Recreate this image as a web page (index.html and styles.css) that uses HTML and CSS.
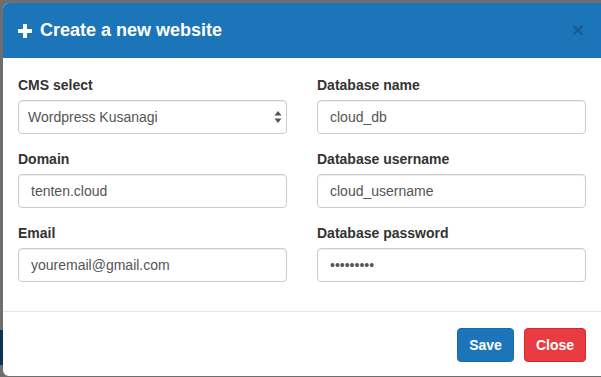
FILE: index.html
```html
<!DOCTYPE html>
<html lang="en">
<head>
  <meta charset="UTF-8" />
  <meta name="viewport" content="width=device-width, initial-scale=1.0"/>
  <title>Create a new website</title>
  <link rel="stylesheet" href="styles.css">
</head>
<body>
  <div class="backdrop-title">Ultratest WordPress Virtu</div>

  <div class="modal">
    <div class="modal-header">
      <h4 class="modal-title">
        <svg class="plus" width="14" height="14" viewBox="0 0 14 14"><path d="M5 0h4v5h5v4H9v5H5V9H0V5h5z" fill="#fff"/></svg>
        Create a new website
      </h4>
      <span class="close">&times;</span>
    </div>

    <div class="modal-body">
      <div class="row">
        <div class="col">
          <div class="form-group">
            <label for="cms">CMS select</label>
            <div class="select-wrap">
              <select id="cms" class="form-control">
                <option>Wordpress Kusanagi</option>
                <option>Wordpress</option>
              </select>
              <svg class="arrows" width="8" height="12" viewBox="0 0 8 12"><path d="M4 0L7.5 4.5H0.5z M4 12L7.5 7.5H0.5z" fill="#555"/></svg>
            </div>
          </div>
          <div class="form-group">
            <label for="domain">Domain</label>
            <input type="text" id="domain" class="form-control" value="tenten.cloud" />
          </div>
          <div class="form-group">
            <label for="email">Email</label>
            <input type="text" id="email" class="form-control" value="youremail@gmail.com" />
          </div>
        </div>
        <div class="col">
          <div class="form-group">
            <label for="dbName">Database name</label>
            <input type="text" id="dbName" class="form-control" value="cloud_db" />
          </div>
          <div class="form-group">
            <label for="dbUser">Database username</label>
            <input type="text" id="dbUser" class="form-control" value="cloud_username" />
          </div>
          <div class="form-group">
            <label for="dbPass">Database password</label>
            <input type="password" id="dbPass" class="form-control" value="secret123" />
          </div>
        </div>
      </div>
    </div>

    <div class="modal-footer">
      <button class="btn btn-primary">Save</button>
      <button class="btn btn-danger">Close</button>
    </div>
  </div>
</body>
</html>
```

FILE: styles.css
```css
html, body {
  margin: 0;
  height: 100%;
  overflow: hidden;
}
body {
  font-family: "Liberation Sans", Arial, sans-serif;
  font-size: 14px;
  color: #333;
  background: linear-gradient(#6e6e6e 0, #6e6e6e 330px, #0e3350 330px, #0e3350 365px, #6e6e6e 365px);
  padding: 3px 0 0 3px;
  box-sizing: border-box;
}
.backdrop-title {
  position: absolute;
  top: -29px;
  left: 336px;
  font-size: 30px;
  font-weight: bold;
  color: #1c1c1c;
  white-space: nowrap;
}
.modal {
  position: relative;
  z-index: 1;
  width: 598px;
  background: #fff;
  border-radius: 6px 0 0 6px;
  overflow: hidden;
}
.modal-header {
  background: #1c75b9;
  padding: 15px;
  display: flex;
  align-items: center;
  justify-content: space-between;
}
.modal-title {
  margin: 0;
  font-size: 18px;
  line-height: 25px;
  font-weight: bold;
  color: #fff;
  display: flex;
  align-items: center;
  gap: 8px;
}
.close {
  font-size: 21px;
  font-weight: bold;
  line-height: 1;
  color: #000;
  opacity: 0.2;
  margin-right: 2px;
  margin-top: -2px;
}
.modal-body {
  padding: 17px 15px 14px;
}
.row {
  display: flex;
  margin: 0 -15px;
}
.col {
  flex: 1;
  padding: 0 15px;
}
.form-group {
  margin-bottom: 15px;
}
label {
  display: block;
  font-weight: bold;
  line-height: 20px;
  margin-bottom: 5px;
}
.form-control {
  display: block;
  width: 100%;
  height: 34px;
  box-sizing: border-box;
  padding: 6px 12px;
  font-family: inherit;
  font-size: 14px;
  color: #555;
  background: #fff;
  border: 1px solid #ccc;
  border-radius: 4px;
  box-shadow: inset 0 1px 1px rgba(0,0,0,.075);
}
.select-wrap {
  position: relative;
}
select.form-control {
  -webkit-appearance: none;
  appearance: none;
  padding-left: 9px;
}
.arrows {
  position: absolute;
  right: 5px;
  top: 11px;
  pointer-events: none;
}
.modal-footer {
  border-top: 1px solid #e5e5e5;
  padding: 16px 15px 14px;
  display: flex;
  justify-content: flex-end;
  gap: 10px;
}
.btn {
  height: 34px;
  padding: 0 11px;
  font-family: inherit;
  font-size: 14px;
  font-weight: bold;
  color: #fff;
  border: 1px solid transparent;
  border-radius: 4px;
  cursor: pointer;
}
.btn-primary {
  background: #1c75b9;
  border-color: #1a69a8;
}
.btn-danger {
  background: #e93c42;
  border-color: #d9262d;
}
```
